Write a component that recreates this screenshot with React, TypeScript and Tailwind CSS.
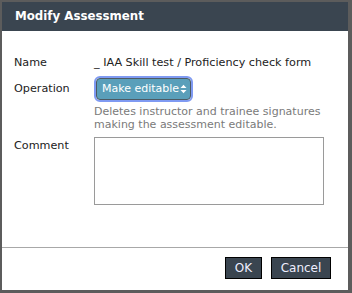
import React from "react";

export default function App() {
  return (
    <div
      className="w-[352px] h-[293px] bg-[#5c5c5c] pt-[2px] pl-[2px] pr-[4px] pb-[3px]"
      style={{ fontFamily: '"DejaVu Sans", "Liberation Sans", sans-serif' }}
    >
      <div className="h-full bg-white flex flex-col">
        <div className="h-[29px] bg-[#3a4550] flex items-center px-[13px] text-white font-bold text-[11.8px] shrink-0">
          Modify Assessment
        </div>
        <div className="flex-1 pt-[24px] pl-[12px] pr-[20px] text-[11.2px] text-[#222]">
          <div className="grid grid-cols-[80px_1fr] items-center h-[16px]">
            <span>Name</span>
            <span>_ IAA Skill test / Proficiency check form</span>
          </div>
          <div className="grid grid-cols-[80px_1fr] mt-[5px]">
            <span className="leading-[16px] mt-[5px]">Operation</span>
            <div>
              <div className="inline-flex rounded-[6px] border-[2px] border-[#7f9af2] p-0">
                <div className="flex items-center h-[22px] rounded-[4px] border border-[#4d5a63] bg-[#5a9fba] text-white pl-[5px] pr-[3px] text-[11px]">
                  <span>Make editable</span>
                  <span className="ml-[1px] flex flex-col items-center leading-none">
                    <svg width="7" height="10" viewBox="0 0 7 10">
                      <path d="M0.5 4 L3.5 0.8 L6.5 4 Z" fill="white" />
                      <path d="M0.5 6 L3.5 9.2 L6.5 6 Z" fill="white" />
                    </svg>
                  </span>
                </div>
              </div>
              <div className="text-[#7a7a7a] leading-[12.5px] mt-[4px] text-[11px]">
                Deletes instructor and trainee signatures
                <br />
                making the assessment editable.
              </div>
            </div>
          </div>
          <div className="grid grid-cols-[80px_1fr] mt-[6px]">
            <span className="leading-[16px] mt-[1px]">Comment</span>
            <textarea className="block w-[230px] h-[68px] border border-[#9a9a9a] resize-none outline-none" />
          </div>
        </div>
        <div className="h-px bg-[#a8a8a8] shrink-0" />
        <div className="flex justify-end gap-[9px] pt-[9px] pb-[11px] pr-[17px] shrink-0">
          <button className="h-[22px] w-[37px] bg-[#3a4550] border border-black text-[#eef] text-[12px]">
            OK
          </button>
          <button className="h-[22px] w-[60px] bg-[#3a4550] border border-black text-[#eef] text-[12px]">
            Cancel
          </button>
        </div>
      </div>
    </div>
  );
}
